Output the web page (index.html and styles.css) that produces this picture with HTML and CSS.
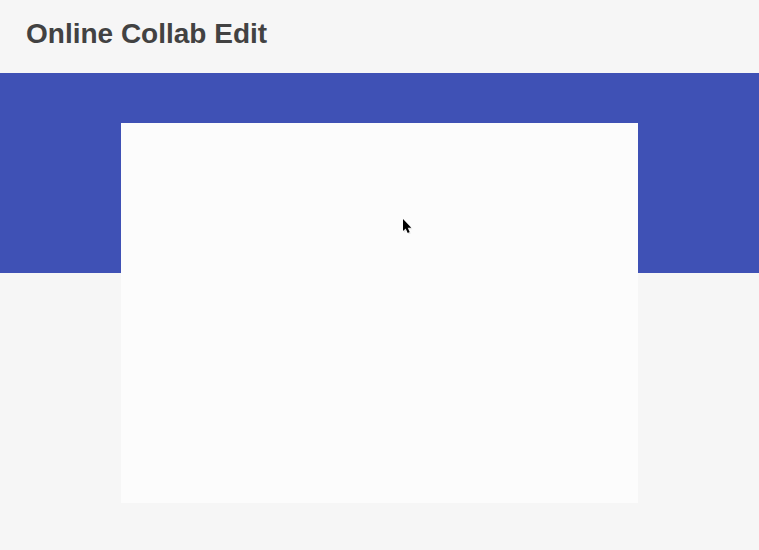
FILE: index.html
```html
<!DOCTYPE html>
<html lang="en">
<head>
<meta charset="utf-8">
<title>Online Collab Edit</title>
<link rel="stylesheet" href="styles.css">
</head>
<body>
<header class="header"><h1 class="title">Online Collab Edit</h1></header>
<div class="ribbon"></div>
<main class="editor"></main>
<svg class="cursor" width="14" height="20" viewBox="0 0 14 20" aria-hidden="true">
<path class="cursor-shadow" d="M2 2.500v12l2.700-2.500 2 4.300 2-.9-1.900-4.200H10.500z"/>
<path d="M1 1v12l2.700-2.500 2 4.500 1.900-.9-1.900-4.300H9.300z"/>
</svg>
</body>
</html>
```
FILE: styles.css
```css
* { box-sizing: border-box; }
body {
  margin: 0;
  height: 550px;
  overflow: hidden;
  background: #f6f6f6;
  font-family: "Liberation Sans", Arial, sans-serif;
}
.header {
  height: 73px;
  padding: 17px 26px;
}
.title {
  margin: 0;
  color: #424242;
  font-size: 28px;
  line-height: 34px;
  font-weight: 700;
  white-space: nowrap;
}
.ribbon {
  height: 200px;
  background: #3f51b5;
}
.editor {
  position: relative;
  width: 517px;
  height: 380px;
  margin: -150px auto 0;
  background: #fcfcfc;
}
.cursor {
  position: absolute;
  left: 402px;
  top: 218px;
}
.cursor-shadow {
  fill: #e2e2e2;
}
```
